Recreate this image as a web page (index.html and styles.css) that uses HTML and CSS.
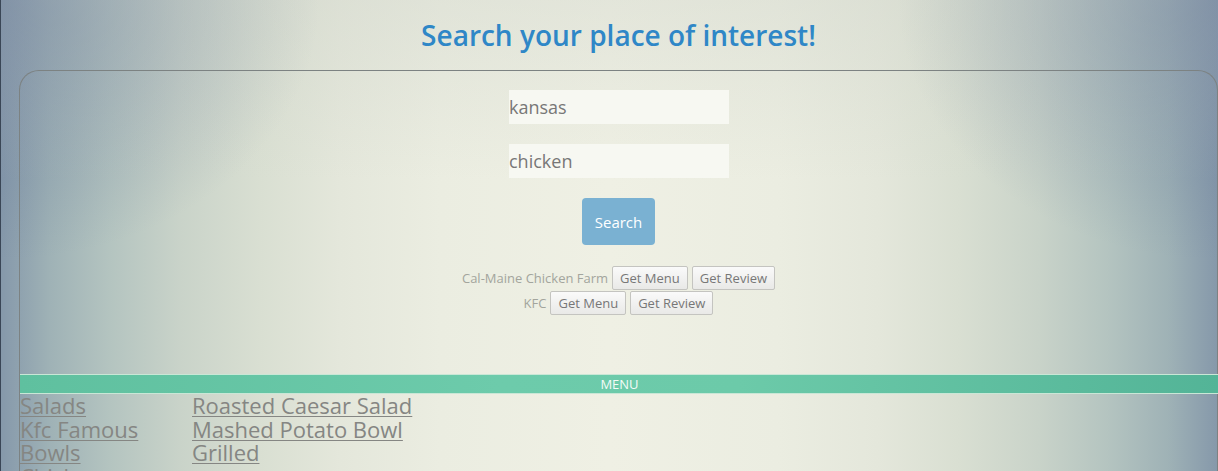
FILE: index.html
```html
<!DOCTYPE html>
<html>
<head>
<meta charset="utf-8">
<link rel="stylesheet" href="styles.css">
</head>
<body>
<div class="page">
  <h1 class="title">Search your place of interest!</h1>
  <div class="panel">
    <form class="search">
      <input class="field" type="text" value="kansas">
      <input class="field" type="text" value="chicken">
      <button class="search-btn" type="button">Search</button>
    </form>
    <div class="results">
      <div class="result">
        <span class="name">Cal-Maine Chicken Farm</span>
        <button class="small-btn" type="button">Get Menu</button>
        <button class="small-btn" type="button">Get Review</button>
      </div>
      <div class="result">
        <span class="name">KFC</span>
        <button class="small-btn" type="button">Get Menu</button>
        <button class="small-btn" type="button">Get Review</button>
      </div>
    </div>
    <div class="menu-bar">MENU</div>
    <div class="menu">
      <div class="col col-cat">
        <a href="#">Salads</a>
        <a href="#">Kfc Famous</a>
        <a href="#">Bowls</a>
        <a href="#">Chicken</a>
      </div>
      <div class="col">
        <a href="#">Roasted Caesar Salad</a>
        <a href="#">Mashed Potato Bowl</a>
        <a href="#">Grilled</a>
      </div>
    </div>
  </div>
</div>
</body>
</html>
```

FILE: styles.css
```css
html, body {
  margin: 0;
  padding: 0;
  height: 100%;
  overflow: hidden;
}
body {
  font-family: "Open Sans", "Noto Sans", sans-serif;
  background:
    linear-gradient(to right, #3a4656 0, #3a4656 1px, transparent 1px),
    radial-gradient(ellipse 320px 260px at 0 0, rgba(95, 115, 150, 0.45), rgba(95, 115, 150, 0)),
    radial-gradient(ellipse 320px 260px at 100% 0, rgba(95, 115, 150, 0.45), rgba(95, 115, 150, 0)),
    linear-gradient(to bottom, rgba(205, 210, 200, 0.35) 0, rgba(205, 210, 200, 0) 180px),
    linear-gradient(to right,
      #8598aa 0, #9fb2b6 50px, #b4c4c0 110px, #c9d3c9 180px, #d9dfd2 260px,
      #e4e7db 340px, #ebede1 440px, #eff0e4 609px, #ebede1 778px,
      #e4e7db 878px, #d9dfd2 958px, #c9d3c9 1038px, #b4c4c0 1108px,
      #9fb2b6 1168px, #8598aa 1218px);
}
.page {
  padding-top: 17px;
  padding-left: 19px;
}
.title {
  margin: 0 0 16px;
  text-align: center;
  font-size: 28px;
  font-weight: 600;
  color: #2f87c7;
  line-height: 37px;
}
.panel {
  border: 1px solid #7c8282;
  border-bottom: none;
  border-radius: 20px 20px 0 0;
  height: 420px;
  padding-top: 19px;
}
.search {
  display: flex;
  flex-direction: column;
  align-items: center;
  gap: 20px;
}
.field {
  width: 220px;
  height: 34px;
  box-sizing: border-box;
  border: none;
  padding: 0;
  margin: 0 0 0 1px;
  background: #f7f8f2;
  font-family: "Open Sans", "Noto Sans", sans-serif;
  font-size: 18px;
  color: #777;
  outline: none;
}
.search-btn {
  width: 73px;
  height: 47px;
  border: none;
  border-radius: 4px;
  background: #7ab1d2;
  color: #fff;
  font-family: "Open Sans", "Noto Sans", sans-serif;
  font-size: 15px;
  padding: 0;
}
.results {
  margin-top: 21px;
  display: flex;
  flex-direction: column;
  align-items: center;
  gap: 1px;
}
.result {
  display: flex;
  align-items: center;
  gap: 4px;
  font-size: 13px;
  color: #a3a59d;
}
.small-btn {
  height: 24px;
  padding: 0 7px;
  border: 1px solid #c4c4c0;
  border-radius: 2px;
  background: linear-gradient(#fafafa, #e9e9e7);
  color: #777;
  font-family: "Open Sans", "Noto Sans", sans-serif;
  font-size: 13px;
}
.menu-bar {
  margin-top: 59px;
  height: 18px;
  line-height: 18px;
  border-top: 1px solid #c9e7d6;
  border-bottom: 1px solid #c9e7d6;
  background: linear-gradient(to right, #5fc09f, #6dcbab 40%, #6ccaa9 60%, #53b497);
  color: #f4fbf7;
  text-align: center;
  font-size: 13px;
  margin-right: -2px;
}
.menu {
  display: flex;
}
.col {
  display: flex;
  flex-direction: column;
}
.col-cat {
  width: 172px;
}
.col a {
  font-size: 22px;
  line-height: 23.5px;
  color: #858683;
  text-decoration: underline;
  text-decoration-thickness: 1px;
  text-underline-offset: 2px;
  white-space: nowrap;
}
```
